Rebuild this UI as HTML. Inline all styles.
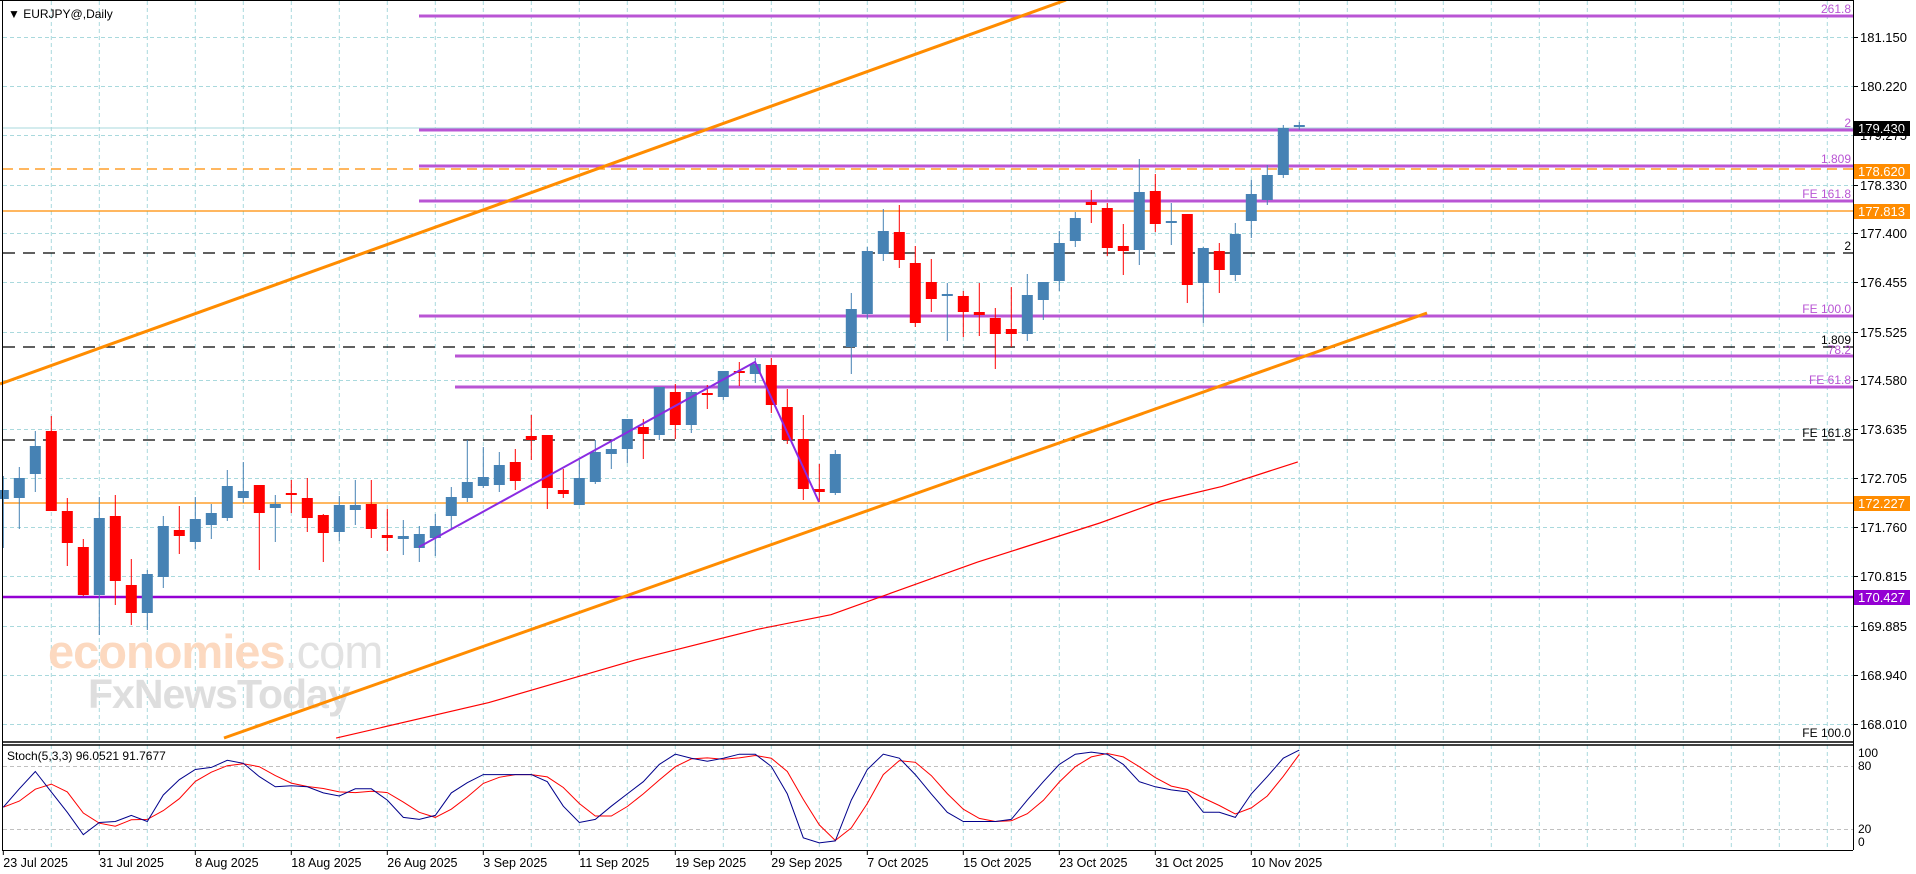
<!DOCTYPE html>
<html><head><meta charset="utf-8"><style>
html,body{margin:0;padding:0;background:#fff;}
svg{display:block;font-family:"Liberation Sans",sans-serif;}
</style></head><body>
<svg id="s" width="1916" height="874" viewBox="0 0 1916 874" xmlns="http://www.w3.org/2000/svg">
<rect width="1916" height="874" fill="#fff"/>
<g id="grid"></g>
<!-- watermark -->
<text x="48" y="668" font-size="47" font-weight="bold" fill="#fcd9c0" letter-spacing="-1">economies<tspan fill="#e2e2e2" font-weight="normal">.com</tspan></text>
<text x="88" y="708" font-size="41" font-weight="bold" fill="#dedede" letter-spacing="-1">FxNewsToday</text>
<g id="lines"></g>
<g id="candles"></g>
<g id="top"></g>
<g id="stoch"></g>
<!-- borders -->
<line x1="2.5" y1="0" x2="2.5" y2="850" stroke="#000"/>
<line x1="0" y1="0.5" x2="1853" y2="0.5" stroke="#000"/>
<line x1="1853.5" y1="0" x2="1853.5" y2="850" stroke="#000"/>
<line x1="2" y1="742" x2="1853" y2="742" stroke="#000" stroke-width="1.5"/>
<line x1="2" y1="745" x2="1853" y2="745" stroke="#000" stroke-width="1.5"/>
<line x1="2" y1="850.5" x2="1853" y2="850.5" stroke="#000"/>
<g id="axis" font-size="13" fill="#000"></g>
<text x="8" y="18" font-size="12" fill="#000">▼ EURJPY@,Daily</text>
<text x="7" y="760" font-size="12" fill="#000">Stoch(5,3,3) 96.0521 91.7677</text>
</svg>
<script>
var NS="http://www.w3.org/2000/svg";
function el(p,t,a,txt){var e=document.createElementNS(NS,t);for(var k in a)e.setAttribute(k,a[k]);if(txt!=null)e.textContent=txt;document.getElementById(p).appendChild(e);return e;}
var gridY=[37,86,135,185,233,282,332,380,429,478,527,576,626,675,724];
var labels=["181.150","180.220","179.275","178.330","177.400","176.455","175.525","174.580","173.635","172.705","171.760","170.815","169.885","168.940","168.010"];
gridY.forEach(function(y,i){
 el("grid","line",{x1:3,y1:y+.5,x2:1853,y2:y+.5,stroke:"#a9d9dd","stroke-dasharray":"4,3"});
 el("axis","line",{x1:1853,y1:y+.5,x2:1858,y2:y+.5,stroke:"#000"});
 el("axis","text",{x:1860,y:y+5},labels[i]);
});
for(var x=51.3;x<1853;x+=48){
 el("grid","line",{x1:x,y1:1,x2:x,y2:742,stroke:"#a9d9dd","stroke-dasharray":"4,3"});
 el("grid","line",{x1:x,y1:745,x2:x,y2:850,stroke:"#a9d9dd","stroke-dasharray":"4,3"});
}
// stoch levels
[766,829].forEach(function(y){el("grid","line",{x1:3,y1:y+.5,x2:1853,y2:y+.5,stroke:"#c0c0c0","stroke-dasharray":"4,3"});});
[["100",757],["80",770],["20",833],["0",846]].forEach(function(a){el("axis","text",{x:1858,y:a[1],"font-size":"12"},a[0]);});
// dates
var dates=["23 Jul 2025","31 Jul 2025","8 Aug 2025","18 Aug 2025","26 Aug 2025","3 Sep 2025","11 Sep 2025","19 Sep 2025","29 Sep 2025","7 Oct 2025","15 Oct 2025","23 Oct 2025","31 Oct 2025","10 Nov 2025"];
dates.forEach(function(d,i){var x=3.3+96*i;el("axis","line",{x1:x,y1:850,x2:x,y2:855,stroke:"#000"});el("axis","text",{x:x,y:867,"font-size":"12.5"},d);});
// horizontal levels
var M="#b955d4";
function H(y,x1,col,w,dash){var a={x1:x1,y1:y,x2:1853,y2:y,stroke:col,"stroke-width":w};if(dash)a["stroke-dasharray"]=dash;el("lines","line",a);}
H(128,3,"#a9d9dd",1);
H(169,3,"#ff8c00",1.2,"10,6");
H(211,3,"#ff8c00",1.2);
H(253,3,"#000",1.2,"12,8");
H(347,3,"#000",1.2,"12,8");
H(440,3,"#000",1.2,"12,8");
H(503,3,"#ff8c00",1.2);
H(597,3,"#9400d3",2.5);
H(16,419,M,3);H(130,419,M,3);H(166,419,M,3);H(201,419,M,3);H(316,419,M,3);
H(356,455,M,3);H(387,455,M,3);
// level labels
function L(t,y,c){el("lines","text",{x:1851,y:y,"text-anchor":"end","font-size":"12",fill:c},t);}
L("261.8",13,M);L("2",127,M);L("1.809",163,M);L("FE 161.8",198,M);L("2",250,"#000");
L("FE 100.0",313,M);L("1.809",344,"#000");L("78.2",354,M);L("FE 61.8",384,M);L("FE 161.8",437,"#000");L("FE 100.0",737,"#000");
// diagonal lines
el("lines","line",{x1:0,y1:384,x2:1066,y2:0,stroke:"#ff8c00","stroke-width":3});
el("lines","line",{x1:224,y1:738,x2:1427,y2:313,stroke:"#ff8c00","stroke-width":3});
var ma=[[275,604],[400,575],[520,540],[620,515],[680,503],[730,485],[800,460],[900,428],[950,410],[1000,398],[1062,378]].map(function(p){return (p[0]*1.222).toFixed(1)+","+(p[1]*1.222).toFixed(1);}).join(" ");
el("lines","polyline",{points:ma,fill:"none",stroke:"#ff0000","stroke-width":1.2});
el("top","polyline",{points:"419,547 755,362 819,502",fill:"none",stroke:"#8a2be2","stroke-width":2});
// candles: [bodyTop,bodyBot,wickTop,wickBot,bull]
var C=[[490,499,476,548,1],[478,498,467,529,1],[446,474,431,492,1],[431,511,416,511,0],[511,543,498,566,0],[547,595,539,596,0],[518,595,497,635,1],[516,581,495,605,0],[585,613,559,625,0],[574,613,570,630,1],
[526,577,516,588,1],[530,536,506,554,0],[519,542,497,549,1],[513,525,504,539,1],[486,518,470,521,1],[491,498,462,503,1],[485,513,485,570,0],[504,508,495,542,1],[493,495,480,513,0],[498,518,478,532,0],
[515,533,514,562,0],[505,532,496,541,1],[505,510,480,525,1],[504,529,480,538,0],[535,538,509,551,0],[536,539,520,555,1],[534,548,526,562,1],[526,538,514,556,1],[497,516,487,530,1],[482,498,440,502,1],
[477,486,447,488,1],[465,485,452,492,1],[462,481,449,490,0],[436,440,415,460,0],[435,488,435,509,0],[490,494,469,498,0],[478,505,460,505,1],[452,482,440,484,1],[449,454,442,469,1],[419,449,419,463,1],
[427,434,419,459,0],[387,435,387,440,1],[392,425,384,439,0],[392,425,390,433,1],[393,395,385,409,0],[371,397,371,400,1],[371,373,362,386,0],[364,374,358,383,1],[365,405,358,413,0],[407,440,389,444,0],
[439,489,415,500,0],[489,492,464,502,0],[454,493,450,495,1],[309,347,293,374,1],[251,314,247,319,1],[231,254,209,261,1],[232,260,205,268,0],[263,323,246,327,0],[282,299,259,312,0],[294,296,283,341,1],
[296,312,291,337,0],[312,315,283,336,0],[318,334,308,369,0],[329,334,287,347,0],[295,334,274,341,1],[282,300,282,320,1],[243,281,231,291,1],[218,241,212,247,1],[202,205,190,223,0],[208,248,203,256,0],
[246,251,224,275,0],[192,250,159,265,1],[191,224,174,232,0],[221,223,203,245,1],[214,285,214,303,0],[248,283,247,323,1],[251,270,243,293,0],[234,275,223,281,1],[194,221,180,238,1],[175,200,165,205,1],
[128,175,125,178,1],[125,127,122,130,1]];
C.forEach(function(c,i){var x=3.3+16*i;var col=c[4]?"#4682b4":"#ff0000";
 el("candles","line",{x1:x,y1:c[2],x2:x,y2:c[3],stroke:col,"stroke-width":1});
 el("candles","rect",{x:x-5.5,y:c[0],width:11,height:Math.max(2,c[1]-c[0]),fill:col});
});
// right boxes
function B(t,y,bg){el("top","rect",{x:1854,y:y-7,width:56,height:15,fill:bg});el("top","text",{x:1858,y:y+5,fill:"#fff","font-size":"13"},t);}
B("179.430",128,"#000");B("178.620",171,"#ff8c00");B("177.813",211,"#ff8c00");B("172.227",503,"#ff8c00");B("170.427",597,"#9400d3");
// stochastic
var K=[40,58,75,55,35,13,25,26,32,26,52,67,77,79,86,83,70,60,61,60,54,51,58,58,47,30,28,32,54,64,72,72,72,72,65,41,25,28,41,53,65,82,92,88,85,88,92,92,80,53,10,5,7,47,77,92,88,72,53,35,26,26,26,28,47,65,82,92,94,92,82,65,60,57,55,35,35,30,53,70,88,96];
function sy(v){return 848-v*1.02;}
var pk=[],pd=[];
K.forEach(function(v,i){var x=3.3+16*i;pk.push(x+","+sy(v).toFixed(1));
 var a=K[Math.max(0,i-2)],b=K[Math.max(0,i-1)];var d=(a+b+v)/3;if(i==K.length-1)d=91.77;pd.push(x+","+sy(d).toFixed(1));});
el("stoch","polyline",{points:pd.join(" "),fill:"none",stroke:"#ff0000","stroke-width":1});
el("stoch","polyline",{points:pk.join(" "),fill:"none",stroke:"#00008b","stroke-width":1});
</script>
</body></html>
